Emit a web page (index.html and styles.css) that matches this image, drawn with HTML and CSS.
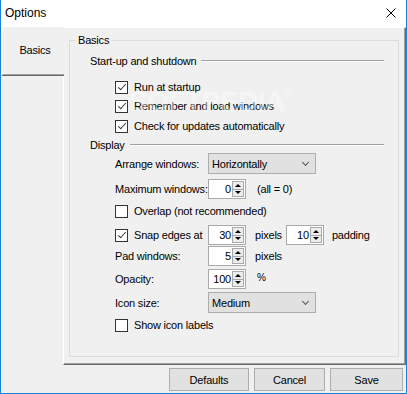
FILE: index.html
```html
<!DOCTYPE html>
<html lang="en">
<head>
    <meta charset="UTF-8">
    <title>Options</title>
    <link rel="stylesheet" href="styles.css">
</head>
<body>
    <div class="window">
        <div class="titlebar">
            <span class="title">Options</span>
            <svg class="close" width="10" height="10" viewBox="0 0 10 10">
                <path d="M0.5 0.5 L9.5 9.5 M9.5 0.5 L0.5 9.5" stroke="#000" stroke-width="1" fill="none"/>
            </svg>
        </div>

        <div class="tabs">
            <div class="tab-list">
                <div class="tab">Basics</div>
            </div>
            <div class="page">
                <fieldset class="group">
                    <legend>Basics</legend>
                    <div class="group-body">
                        <div class="section first"><span>Start-up and shutdown</span><span class="rule"></span></div>

                        <div class="row check r-run"><span class="box on"></span>Run at startup</div>
                        <div class="row check r-remember"><span class="box on"></span>Remember and load windows</div>
                        <div class="row check r-updates"><span class="box on"></span>Check for updates automatically</div>

                        <div class="section r-display"><span>Display</span><span class="rule"></span></div>

                        <div class="row field r-arrange">
                            <span class="label">Arrange windows:</span>
                            <span class="combo">Horizontally<span class="chevron"></span></span>
                        </div>
                        <div class="row field r-max">
                            <span class="label">Maximum windows:</span>
                            <span class="spin"><span class="spin-val">0</span><span class="spin-btns"><i class="up"></i><i class="down"></i></span></span>
                            <span class="note">(all = 0)</span>
                        </div>
                        <div class="row check r-overlap"><span class="box"></span>Overlap (not recommended)</div>
                        <div class="row field r-snap">
                            <span class="label check"><span class="box on"></span>Snap edges at</span>
                            <span class="spin"><span class="spin-val">30</span><span class="spin-btns"><i class="up"></i><i class="down"></i></span></span>
                            <span class="unit">pixels</span>
                            <span class="spin"><span class="spin-val">10</span><span class="spin-btns"><i class="up"></i><i class="down"></i></span></span>
                            <span class="unit padding">padding</span>
                        </div>
                        <div class="row field r-pad">
                            <span class="label">Pad windows:</span>
                            <span class="spin"><span class="spin-val">5</span><span class="spin-btns"><i class="up"></i><i class="down"></i></span></span>
                            <span class="unit">pixels</span>
                        </div>
                        <div class="row field r-opacity">
                            <span class="label">Opacity:</span>
                            <span class="spin"><span class="spin-val">100</span><span class="spin-btns"><i class="up"></i><i class="down"></i></span></span>
                            <span class="unit percent">%</span>
                        </div>
                        <div class="row field r-icon">
                            <span class="label">Icon size:</span>
                            <span class="combo">Medium<span class="chevron"></span></span>
                        </div>
                        <div class="row check r-labels"><span class="box"></span>Show icon labels</div>
                    </div>
                </fieldset>
            </div>
        </div>

        <div class="footer">
            <button class="btn defaults">Defaults</button>
            <button class="btn cancel">Cancel</button>
            <button class="btn save">Save</button>
        </div>

        <div class="watermark">SOFTPEDIA<span class="reg">®</span></div>
    </div>
</body>
</html>
```

FILE: styles.css
```css
* {
    margin: 0;
    padding: 0;
    box-sizing: border-box;
}

body {
    font-family: 'Liberation Sans', Arial, sans-serif;
    font-size: 11px;
    letter-spacing: -0.2px;
    color: #000;
    background: #f0f0f0;
}

.window {
    position: relative;
    width: 407px;
    height: 394px;
    background: #f0f0f0;
    border: 1px solid #1883d7;
    border-top: none;
    overflow: hidden;
}

/* title bar */
.titlebar {
    height: 27px;
    background: #fff;
    display: flex;
    align-items: center;
    justify-content: space-between;
    margin: 0 -1px;
    padding: 0 11px 1px 5px;
}

.title {
    font-size: 12px;
    letter-spacing: 0;
}

.close {
    display: block;
}

/* vertical tab control */
.tabs {
    display: flex;
    height: 338px;
    margin-left: 1px;
}

.tab-list {
    width: 61px;
}

.tab {
    position: relative;
    z-index: 1;
    width: 62px;
    height: 48px;
    margin-right: -1px;
    background: #f0f0f0;
    border-left: 1px solid #fff;
    border-bottom: 1px solid #a0a0a0;
    box-shadow: 0 1px 0 #696969;
    display: flex;
    align-items: center;
    justify-content: center;
    padding-left: 3px;
    padding-bottom: 1px;
}

.page {
    width: 343px;
    height: 338px;
    border-top: 1px solid #fff;
    border-left: 1px solid #fff;
    border-right: 1px solid #696969;
    border-bottom: 1px solid #696969;
    box-shadow: inset -1px -1px 0 #a0a0a0;
    display: flex;
    flex-direction: column;
    padding-top: 5px;
}

/* group box */
.group {
    flex: 1;
    min-width: 0;
    margin: 0 6px 7px 5px;
    padding: 0 14px 0 6px;
    border: 1px solid #dcdcdc;
}

.group legend {
    padding: 0 2px;
    line-height: 14px;
}

.group-body {
    display: flex;
    flex-direction: column;
    padding-left: 14px;
}

.section {
    display: flex;
    align-items: center;
    height: 16px;
    gap: 5px;
    white-space: nowrap;
}

.section .rule {
    flex: 1;
    height: 2px;
    border-top: 1px solid #a0a0a0;
    border-bottom: 1px solid #fff;
}

.row {
    display: flex;
    align-items: center;
    height: 18px;
    padding-left: 25px;
    white-space: nowrap;
}

.check .box {
    margin-right: 6px;
}

.box {
    width: 13px;
    height: 13px;
    border: 1px solid #333;
    background: #fff;
    flex-shrink: 0;
    position: relative;
}

.box.on::after {
    content: "";
    position: absolute;
    left: 3.5px;
    top: 0.5px;
    width: 3px;
    height: 7px;
    border-right: 1.5px solid #333;
    border-bottom: 1.5px solid #333;
    transform: rotate(42deg);
}

.field .label {
    width: 93px;
    flex-shrink: 0;
    display: flex;
    align-items: center;
}

.combo {
    width: 108px;
    height: 21px;
    border: 1px solid #adadad;
    background: #e1e1e1;
    display: flex;
    align-items: center;
    justify-content: space-between;
    padding: 0 7px 0 3px;
}

.chevron {
    width: 5px;
    height: 5px;
    border-right: 1px solid #555;
    border-bottom: 1px solid #555;
    transform: rotate(45deg);
    margin-top: -3px;
}

.spin {
    width: 38px;
    height: 20px;
    border: 1px solid #a9a9a9;
    background: #fff;
    display: flex;
    flex-shrink: 0;
}

.spin-val {
    flex: 1;
    text-align: right;
    line-height: 18px;
    padding-right: 1px;
}

.spin-btns {
    width: 12px;
    margin: 1px 1px 1px 0;
    border: 1px solid #a9a9a9;
    background: #ececec;
    display: flex;
    flex-direction: column;
}

.spin-btns i {
    flex: 1;
    display: flex;
    align-items: center;
    justify-content: center;
}

.spin-btns i + i {
    border-top: 1px solid #a9a9a9;
}

.spin-btns i::before {
    content: "";
    border-left: 3px solid transparent;
    border-right: 3px solid transparent;
}

.spin-btns .up::before {
    border-bottom: 3px solid #000;
}

.spin-btns .down::before {
    border-top: 3px solid #000;
}

.note {
    margin-left: 11px;
}

.unit {
    margin: 0 4px 0 9px;
}

.unit.padding {
    margin-left: 8px;
}

.unit.percent {
    margin-left: 11px;
    margin-top: -3px;
    font-size: 10px;
}

/* row spacing */
.section.first { margin-top: 6px; }
.r-run { margin-top: 9px; }
.r-remember { margin-top: 1px; }
.r-updates { margin-top: 2px; }
.r-display { margin-top: 2px; }
.r-arrange { height: 21px; }
.r-max { height: 20px; margin-top: 5px; }
.r-overlap { margin-top: 3px; }
.r-snap { height: 20px; margin-top: 5px; }
.r-pad { height: 20px; margin-top: 1px; }
.r-opacity { height: 20px; margin-top: 3px; }
.r-icon { height: 21px; margin-top: 3px; }
.r-labels { margin-top: 3px; }

/* dialog buttons */
.footer {
    display: flex;
    justify-content: flex-end;
    gap: 5px;
    padding: 3px 3px 0 0;
}

.btn {
    height: 23px;
    font-family: inherit;
    font-size: 11px;
    letter-spacing: -0.2px;
    background: #e1e1e1;
    border: 1px solid #adadad;
    color: #000;
}

.btn.defaults { width: 80px; }
.btn.cancel { width: 71px; }
.btn.save { width: 73px; }

.watermark {
    position: absolute;
    left: 128px;
    top: 86px;
    font-size: 28px;
    font-weight: bold;
    letter-spacing: -0.5px;
    color: rgba(255, 255, 255, 0.4);
    pointer-events: none;
}

.watermark .reg {
    font-size: 10px;
    vertical-align: top;
    font-weight: normal;
}
```
